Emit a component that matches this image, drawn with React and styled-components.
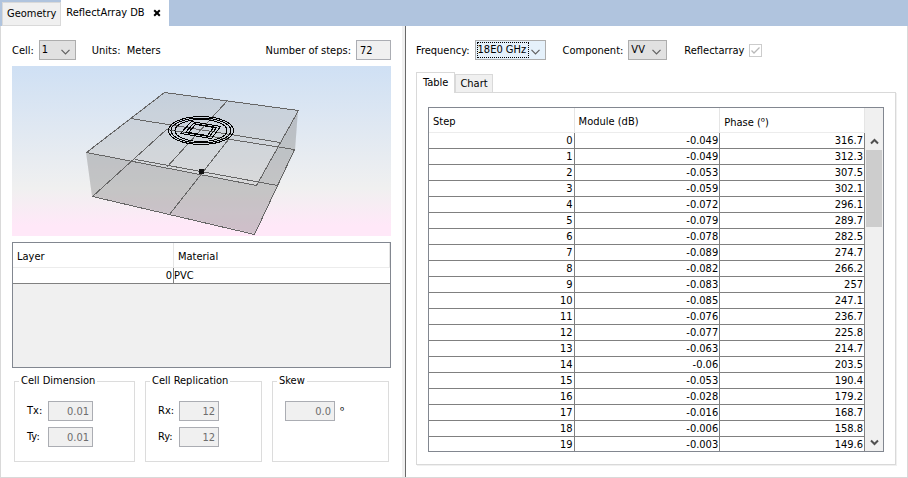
import React, { useRef } from "react";
import styled, { createGlobalStyle, css } from "styled-components";

const Global = createGlobalStyle`
  *, *::before, *::after { box-sizing: border-box; }
  body { margin: 0; }
  body, input, select, button, table {
    font-family: Tahoma, "DejaVu Sans Condensed", "Noto Sans", sans-serif;
    font-size: 11px;
    line-height: 14px;
    color: #000;
  }
`;

const Window = styled.div`
  display: flex;
  flex-direction: column;
  height: 100vh;
  background: #b0c4de;
`;

const DocumentTabs = styled.div`
  display: flex;
  align-items: flex-end;
  height: 26px;
  padding-left: 2px;
`;

const DocumentTab = styled.div`
  display: flex;
  align-items: center;
  gap: 8px;
  height: ${(p) => (p.$active ? 26 : 24)}px;
  padding: 0 ${(p) => (p.$active ? 8 : 0)}px 0 ${(p) => (p.$active ? 5 : 0)}px;
  background: ${(p) => (p.$active ? "#fff" : "#f0f0f0")};
  border: ${(p) => (p.$active ? "0" : "1px solid #d9d9d9")};
`;

const TabLabel = styled.button`
  border: 0;
  background: none;
  padding: 0 ${(p) => (p.$inset ? 4 : 0)}px;
  white-space: nowrap;
`;

const CloseButton = styled.button`
  display: flex;
  border: 0;
  background: none;
  padding: 0;
`;

const Workspace = styled.main`
  flex: 1;
  min-height: 0;
  display: flex;
  background: #fff;
  border: 1px solid #d9d9d9;
  border-top: 0;
`;

const GeometryPane = styled.section`
  flex: 379 1 0;
  min-width: 0;
  display: flex;
  flex-direction: column;
  gap: 6px;
  padding: 14px 11px 15px 11px;
`;

const Divider = styled.div`
  width: 4px;
  background: #f0f0f0;
  border-right: 1px solid #696969;
`;

const ResultsPane = styled.section`
  flex: 480 1 0;
  min-width: 0;
  display: flex;
  flex-direction: column;
  gap: 12px;
  padding: 14px 11px 12px 10px;
`;

const Toolbar = styled.div`
  display: flex;
  align-items: center;
  height: 20px;
  gap: ${(p) => p.$gap}px;
  white-space: nowrap;
`;

const Caption = styled.span`
  padding-top: 2px;
`;

const ShortCaption = styled.span`
  min-width: 16px;
`;

const Degree = styled.span`
  font-family: Tahoma, "Noto Sans", sans-serif;
`;

const Field = styled.label`
  display: flex;
  align-items: center;
  gap: 5px;
  margin-left: ${(p) => (p.$end ? "auto" : "0")};
`;

const SelectFrame = styled.span`
  position: relative;
  display: block;
  width: ${(p) => p.$width}px;
  height: 20px;
  background: ${(p) => (p.$focused ? "#e5f1fb" : "#e1e1e1")};
  border: 1px solid #adadad;

  svg {
    position: absolute;
    right: 5px;
    top: 8px;
    pointer-events: none;
  }
`;

const SelectBox = styled.select`
  appearance: none;
  display: block;
  width: calc(100% - 19px);
  height: 14px;
  margin: 2px;
  padding: 0;
  border: 0;
  border-radius: 0;
  background: none;
  outline: ${(p) => (p.$focused ? "1px dotted #000" : "0")};
`;

const TextBox = styled.input`
  width: ${(p) => p.$width}px;
  height: 20px;
  padding: 0 3px;
  border: 1px solid #abadb3;
  border-radius: 0;
  background: #f0f0f0;
  text-align: ${(p) => p.$align || "left"};
  color: ${(p) => (p.disabled ? "#6d6d6d" : "#000")};
`;

const CheckFrame = styled.span`
  position: relative;
  display: block;
  width: 13px;
  height: 13px;

  svg {
    position: absolute;
    inset: 0;
    pointer-events: none;
  }
`;

const CheckBox = styled.input`
  appearance: none;
  display: block;
  width: 13px;
  height: 13px;
  margin: 0;
  border: 1px solid #ccc;
  background: #fff;
`;

const Viewport3D = styled.div`
  height: 170px;
  background: linear-gradient(#cfe0f4 0%, #f0f0f0 72%, #ffe8f8 94%);

  svg {
    display: block;
    width: 100%;
    height: 100%;
  }
`;

const tableFrame = css`
  flex: 1;
  min-height: 0;
  border: 1px solid #828790;
`;

const LayerFrame = styled.div`
  ${tableFrame}
  background: #f0f0f0;
`;

const ResultsFrame = styled.div`
  ${tableFrame}
  display: flex;
  background: #fff;
`;

const Grid = styled.table`
  width: 100%;
  table-layout: fixed;
  border-collapse: separate;
  border-spacing: 0;
  background: #fff;
`;

const HeadCell = styled.th`
  position: sticky;
  top: 0;
  height: 25px;
  padding: 4px 4px 0;
  text-align: left;
  font-weight: 400;
  background: #fff;
  border-right: 1px solid #e5e5e5;
  border-bottom: 1px solid #ececec;
`;

const Cell = styled.td`
  height: 16px;
  padding: 0 1px 0 0;
  text-align: ${(p) => p.$align || "right"};
  border-right: 1px solid #808080;
  border-bottom: 1px solid #808080;
`;

const LayerCell = styled(Cell)`
  &:last-child {
    border-right: 0;
  }
`;

const Groups = styled.div`
  display: grid;
  grid-template-columns: 121fr 117fr 117fr;
  gap: 10px;
  padding: 0 2px;
`;

const Group = styled.fieldset`
  min-width: 0;
  height: 88px;
  margin: 0;
  padding: 13px 12px 0;
  border: 1px solid #dcdcdc;
  display: flex;
  flex-direction: column;
  gap: 6px;
`;

const Legend = styled.legend`
  margin-left: -8px;
  padding: 0 2px;
  white-space: nowrap;
`;

const ResultTabs = styled.div`
  display: flex;
  align-items: flex-end;
  height: 20px;
`;

const ResultTab = styled.button`
  height: ${(p) => (p.$active ? 21 : 18)}px;
  margin-bottom: ${(p) => (p.$active ? -1 : 0)}px;
  padding: 0 ${(p) => (p.$active ? 6 : 4)}px;
  border: 1px solid #d9d9d9;
  border-bottom: 0;
  background: ${(p) => (p.$active ? "#fff" : "#f0f0f0")};
  position: relative;
  z-index: ${(p) => (p.$active ? 1 : 0)};
`;

const Results = styled.div`
  flex: 1;
  min-height: 0;
  display: flex;
  flex-direction: column;
`;

const ResultPanel = styled.div`
  flex: 1;
  min-height: 0;
  display: flex;
  padding: 14px 11px 12px 11px;
  border: 1px solid #d9d9d9;
  box-shadow: 1px 1px 0 #f0f0f0;
`;

const Scroller = styled.div`
  flex: 1;
  min-width: 0;
  overflow-y: auto;
  scrollbar-width: none;
`;

const ScrollBar = styled.div`
  width: 18px;
  padding: 25px 1px 0;
  display: flex;
  flex-direction: column;
  background: #f0f0f0;
`;

const ScrollButton = styled.button`
  display: flex;
  align-items: center;
  justify-content: center;
  height: 17px;
  padding: 0;
  border: 0;
  background: none;
`;

const ScrollTrack = styled.div`
  flex: 1;
`;

const ScrollThumb = styled.div`
  height: 27%;
  background: #cdcdcd;
`;

const steps = [
  ["-0.049", "316.7"],
  ["-0.049", "312.3"],
  ["-0.053", "307.5"],
  ["-0.059", "302.1"],
  ["-0.072", "296.1"],
  ["-0.079", "289.7"],
  ["-0.078", "282.5"],
  ["-0.089", "274.7"],
  ["-0.082", "266.2"],
  ["-0.083", "257"],
  ["-0.085", "247.1"],
  ["-0.076", "236.7"],
  ["-0.077", "225.8"],
  ["-0.063", "214.7"],
  ["-0.06", "203.5"],
  ["-0.053", "190.4"],
  ["-0.028", "179.2"],
  ["-0.016", "168.7"],
  ["-0.006", "158.8"],
  ["-0.003", "149.6"],
];

function Select({ label, value, width, focused }) {
  return (
    <Field>
      <Caption>{label}</Caption>
      <SelectFrame $width={width} $focused={focused}>
        <SelectBox defaultValue={value} $focused={focused}>
          <option>{value}</option>
        </SelectBox>
        <svg width="9" height="6" viewBox="0 0 9 6">
          <path d="M.5.8 4.5 4.8 8.5.8" fill="none" stroke="#606060" strokeWidth="1.2" />
        </svg>
      </SelectFrame>
    </Field>
  );
}

function NumberField({ label, value, width, unit }) {
  return (
    <Field>
      {label && <ShortCaption>{label}</ShortCaption>}
      <TextBox $width={width} $align="right" defaultValue={value} disabled aria-label={unit ? "Skew" : undefined} />
      {unit && <Degree>{unit}</Degree>}
    </Field>
  );
}

function CellModel() {
  return (
    <Viewport3D>
      <svg viewBox="12 66 379 170" role="img" aria-label="Unit cell geometry">
        <path d="M164 92 298 110 295 150 255 234 92 196 86 152Z" fill="#808080" fillOpacity=".2" />
        <path d="M86 152 256 185 298 110 295 150 255 234 92 196Z" fill="#808080" fillOpacity=".24" />
        <g fill="none" stroke="#666" strokeWidth="1" shapeRendering="crispEdges">
          <path d="M164.5 92.5 298.5 110.5 256.5 185.5 86.5 152.5Z" />
          <path d="M166.5 129.5 294.5 149.5 254.5 234.5 92.5 196.5Z" />
          <path d="M130.5 118.5 280.5 142.5M227.5 100.5 166.5 167.5" />
          <path d="M135.5 159.5 277.5 185.5M228.5 139.5 169.5 214.5" />
        </g>
        <g fill="none" stroke="#000" strokeWidth="1" shapeRendering="crispEdges">
          <ellipse cx="201" cy="130.5" rx="32.5" ry="14" />
          <ellipse cx="201" cy="130.5" rx="30" ry="12.5" />
          <ellipse cx="201" cy="130.5" rx="26" ry="11" />
          <path d="M191.5 121.5 220.5 126.5 211.5 138.5 180.5 133.5Z" />
          <path d="M193.5 123.5 216.5 127.5 209.5 136.5 185.5 132.5Z" />
          <path d="M195.5 124.5 213.5 127.5 207.5 135.5 188.5 132.5Z" />
        </g>
        <rect x="199" y="169" width="5" height="5" fill="#111" />
      </svg>
    </Viewport3D>
  );
}

function StepTable() {
  const scroller = useRef(null);
  const scroll = (amount) => scroller.current.scrollBy(0, amount);
  return (
    <ResultsFrame>
      <Scroller ref={scroller}>
        <Grid>
          <colgroup>
            <col width="33.4%" />
            <col width="33.4%" />
            <col width="33.2%" />
          </colgroup>
          <thead>
            <tr>
              <HeadCell>Step</HeadCell>
              <HeadCell>Module (dB)</HeadCell>
              <HeadCell>
                Phase (<Degree>º</Degree>)
              </HeadCell>
            </tr>
          </thead>
          <tbody>
            {steps.map(([module, phase], step) => (
              <tr key={step}>
                <Cell>{step}</Cell>
                <Cell>{module}</Cell>
                <Cell>{phase}</Cell>
              </tr>
            ))}
          </tbody>
        </Grid>
      </Scroller>
      <ScrollBar>
        <ScrollButton aria-label="Scroll up" onClick={() => scroll(-16)}>
          <svg width="9" height="7" viewBox="0 0 9 7">
            <path d="M1 5.5 4.5 2 8 5.5" fill="none" stroke="#505050" strokeWidth="2" />
          </svg>
        </ScrollButton>
        <ScrollTrack>
          <ScrollThumb />
        </ScrollTrack>
        <ScrollButton aria-label="Scroll down" onClick={() => scroll(16)}>
          <svg width="9" height="7" viewBox="0 0 9 7">
            <path d="M1 1.5 4.5 5 8 1.5" fill="none" stroke="#505050" strokeWidth="2" />
          </svg>
        </ScrollButton>
      </ScrollBar>
    </ResultsFrame>
  );
}

export default function App() {
  return (
    <>
      <Global />
      <Window>
        <DocumentTabs>
          <DocumentTab>
            <TabLabel $inset>Geometry</TabLabel>
          </DocumentTab>
          <DocumentTab $active>
            <TabLabel>ReflectArray DB</TabLabel>
            <CloseButton aria-label="Close">
              <svg width="8" height="8" viewBox="0 0 8 8">
                <path d="M1.2 1.2 6.8 6.8M6.8 1.2 1.2 6.8" stroke="#000" strokeWidth="2" />
              </svg>
            </CloseButton>
          </DocumentTab>
        </DocumentTabs>
        <Workspace>
          <GeometryPane>
            <Toolbar $gap={16}>
              <Select label="Cell:" value="1" width={37} />
              <Caption>Units:&nbsp; Meters</Caption>
              <Field $end>
                <Caption>Number of steps:</Caption>
                <TextBox $width={35} defaultValue="72" readOnly />
              </Field>
            </Toolbar>
            <CellModel />
            <LayerFrame>
              <Grid>
                <colgroup>
                  <col width="42.7%" />
                  <col />
                </colgroup>
                <thead>
                  <tr>
                    <HeadCell>Layer</HeadCell>
                    <HeadCell>Material</HeadCell>
                  </tr>
                </thead>
                <tbody>
                  <tr>
                    <LayerCell>0</LayerCell>
                    <LayerCell $align="left">PVC</LayerCell>
                  </tr>
                </tbody>
              </Grid>
            </LayerFrame>
            <Groups>
              <Group>
                <Legend>Cell Dimension</Legend>
                <NumberField label="Tx:" value="0.01" width={45} />
                <NumberField label="Ty:" value="0.01" width={45} />
              </Group>
              <Group>
                <Legend>Cell Replication</Legend>
                <NumberField label="Rx:" value="12" width={40} />
                <NumberField label="Ry:" value="12" width={40} />
              </Group>
              <Group>
                <Legend>Skew</Legend>
                <NumberField value="0.0" width={50} unit="º" />
              </Group>
            </Groups>
          </GeometryPane>
          <Divider />
          <ResultsPane>
            <Toolbar $gap={17}>
              <Select label="Frequency:" value="18E0 GHz" width={71} focused />
              <Select label="Component:" value="VV" width={39} />
              <Field>
                <Caption>Reflectarray</Caption>
                <CheckFrame>
                  <CheckBox type="checkbox" defaultChecked disabled />
                  <svg width="13" height="13" viewBox="0 0 13 13">
                    <path d="M2.5 6.5 5 9 10.5 3.5" fill="none" stroke="#b8b8b8" strokeWidth="1.3" />
                  </svg>
                </CheckFrame>
              </Field>
            </Toolbar>
            <Results>
              <ResultTabs>
                <ResultTab $active>Table</ResultTab>
                <ResultTab>Chart</ResultTab>
              </ResultTabs>
              <ResultPanel>
                <StepTable />
              </ResultPanel>
            </Results>
          </ResultsPane>
        </Workspace>
      </Window>
    </>
  );
}
